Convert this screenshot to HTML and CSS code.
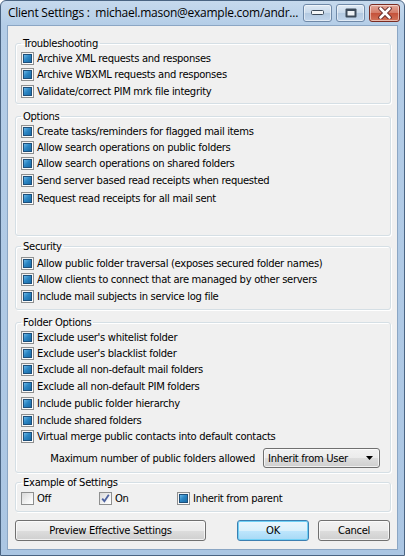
FILE: index.html
```html
<!DOCTYPE html>
<html>
<head>
<meta charset="utf-8">
<link rel="stylesheet" href="styles.css">
</head>
<body>
<div class="window">
  <div class="titlebar">
    <span class="title">Client Settings :  michael.mason@example.com/andr...</span>
    <div class="caption-btns">
      <span class="cap-btn"><svg width="13" height="6" viewBox="0 0 13 6"><rect x="0.5" y="0.5" width="12" height="4" rx="1" fill="#f4f6f8" stroke="#3c4a5a"/></svg></span>
      <span class="cap-btn"><svg width="12" height="10" viewBox="0 0 12 10"><rect x="0.5" y="0.5" width="11" height="9" rx="1" fill="#3c4a5a"/><rect x="2.5" y="3" width="7" height="4.5" fill="#eef2f6"/></svg></span>
      <span class="cap-btn close"><svg width="14" height="12" viewBox="0 0 14 12"><path d="M2.5 1.5 L11.5 10.5 M11.5 1.5 L2.5 10.5" stroke="#5a2020" stroke-width="4.4" stroke-linecap="round"/><path d="M2.5 1.5 L11.5 10.5 M11.5 1.5 L2.5 10.5" stroke="#ffffff" stroke-width="2.6" stroke-linecap="round"/></svg></span>
    </div>
  </div>
  <div class="client">
    <fieldset class="group g-trouble">
      <legend>Troubleshooting</legend>
      <div class="row h16"><span class="cb"><i></i></span>Archive XML requests and responses</div>
      <div class="row h17"><span class="cb"><i></i></span>Archive WBXML requests and responses</div>
      <div class="row h16"><span class="cb"><i></i></span>Validate/correct PIM mrk file integrity</div>
    </fieldset>
    <fieldset class="group g-options">
      <legend>Options</legend>
      <div class="row h16"><span class="cb"><i></i></span>Create tasks/reminders for flagged mail items</div>
      <div class="row h16"><span class="cb"><i></i></span>Allow search operations on public folders</div>
      <div class="row h17"><span class="cb"><i></i></span>Allow search operations on shared folders</div>
      <div class="row h16"><span class="cb"><i></i></span>Send server based read receipts when requested</div>
      <div class="row h20"><span class="cb"><i></i></span>Request read receipts for all mail sent</div>
    </fieldset>
    <fieldset class="group g-security">
      <legend>Security</legend>
      <div class="row h16"><span class="cb"><i></i></span>Allow public folder traversal (exposes secured folder names)</div>
      <div class="row h17"><span class="cb"><i></i></span>Allow clients to connect that are managed by other servers</div>
      <div class="row h16"><span class="cb"><i></i></span>Include mail subjects in service log file</div>
    </fieldset>
    <fieldset class="group g-folder">
      <legend>Folder Options</legend>
      <div class="row h16"><span class="cb"><i></i></span>Exclude user's whitelist folder</div>
      <div class="row h16"><span class="cb"><i></i></span>Exclude user's blacklist folder</div>
      <div class="row h17"><span class="cb"><i></i></span>Exclude all non-default mail folders</div>
      <div class="row h17"><span class="cb"><i></i></span>Exclude all non-default PIM folders</div>
      <div class="row h17"><span class="cb"><i></i></span>Include public folder hierarchy</div>
      <div class="row h16"><span class="cb"><i></i></span>Include shared folders</div>
      <div class="row h17"><span class="cb"><i></i></span>Virtual merge public contacts into default contacts</div>
      <div class="select-row">
        <span class="select-label">Maximum number of public folders allowed</span>
        <span class="select"><span>Inherit from User</span><svg width="7" height="4" viewBox="0 0 7 4"><path d="M0 0 H7 L3.5 4 Z" fill="#000"/></svg></span>
      </div>
    </fieldset>
    <fieldset class="group g-example">
      <legend>Example of Settings</legend>
      <div class="example-row">
        <div class="ex-item w-off"><span class="cb off"></span>Off</div>
        <div class="ex-item w-on"><span class="cb off"><svg width="11" height="11" viewBox="0 0 11 11"><path d="M2.2 5.6 L4.4 8.2 L8.8 1.8" fill="none" stroke="#4d62a0" stroke-width="1.8"/></svg></span>On</div>
        <div class="ex-item"><span class="cb"><i></i></span>Inherit from parent</div>
      </div>
    </fieldset>
    <div class="buttons">
      <span class="btn preview">Preview Effective Settings</span>
      <span class="btn ok">OK</span>
      <span class="btn cancel">Cancel</span>
    </div>
  </div>
</div>
</body>
</html>
```
FILE: styles.css
```css
html, body {
  margin: 0;
  padding: 0;
  background: #ffffff;
}
.window {
  width: 405px;
  height: 556px;
  box-sizing: border-box;
  border: 1px solid #4a6482;
  border-radius: 6px 6px 0 0;
  background: linear-gradient(#c6d9ed, #b4cde7 24px, #abc6e3);
  display: flex;
  flex-direction: column;
  font-family: "DejaVu Sans", sans-serif;
  font-size: 10px;
  letter-spacing: -0.3px;
  color: #000;
}
.titlebar {
  height: 24px;
  display: flex;
  align-items: center;
  padding-left: 7px;
  position: relative;
}
.title {
  font-family: "Open Sans", sans-serif;
  font-size: 12px;
  letter-spacing: -0.25px;
  white-space: pre;
  color: #000;
  margin-top: -1px;
  flex: none;
}
.caption-btns {
  margin-left: auto;
  margin-right: 4px;
  display: flex;
  gap: 4px;
  align-self: flex-start;
  margin-top: 3px;
  flex: none;
}
.cap-btn {
  width: 29px;
  height: 18px;
  flex: none;
  box-sizing: border-box;
  border: 1px solid #6f89a8;
  border-radius: 3px;
  background: linear-gradient(#dfe9f4, #c8d9eb 50%, #b3c9e1 51%, #c2d6ec);
  display: flex;
  align-items: center;
  justify-content: center;
  box-shadow: inset 0 0 0 1px rgba(255,255,255,0.5);
}
.cap-btn.close {
  width: 31px;
  border-color: #7a2c22;
  background: linear-gradient(#e3a89a, #d47a66 50%, #c4513a 51%, #d3745a);
}
.client {
  flex: 1;
  margin: 0 6px 5px;
  border: 1px solid #8ba6c4;
  background: #f0f0f0;
  padding: 11px 6px 0 7px;
  display: flex;
  flex-direction: column;
}
.group {
  margin: 0;
  padding: 0 0 0 5px;
  border: 1px solid #d5dfe5;
  border-radius: 3px;
  box-shadow: inset 1px 1px 0 #fff, 1px 1px 0 #fff;
  min-width: 0;
}
.group legend {
  padding: 0 2px;
  line-height: 13px;
  height: 13px;
  font-size: 10px;
}
.g-trouble { padding-bottom: 4px; }
.g-options { margin-top: 6px; padding-bottom: 27px; }
.g-security { margin-top: 4px; padding-top: 2px; padding-bottom: 5px; }
.g-folder { margin-top: 6px; padding-bottom: 4px; }
.g-example { margin-top: 3px; padding-bottom: 4px; }
.row {
  display: flex;
  align-items: center;
  white-space: nowrap;
}
.h16 { height: 16px; }
.h17 { height: 17px; }
.h20 { height: 20px; }
.cb {
  width: 13px;
  height: 13px;
  box-sizing: border-box;
  border: 1px solid #8e8f8f;
  background: linear-gradient(135deg, #f0f0f0, #ffffff);
  padding: 1px;
  margin-right: 3px;
  flex: none;
  display: flex;
  align-items: center;
  justify-content: center;
}
.cb i {
  display: block;
  width: 9px;
  height: 9px;
  box-sizing: border-box;
  border: 1px solid #1d4f7a;
  background: linear-gradient(135deg, #6ab7e6, #2b86c4 45%, #1a6ba6);
}
.cb.off {
  background: linear-gradient(135deg, #d9d9d9, #f7f7f7 70%, #ffffff);
  padding: 0;
}
.select-row {
  display: flex;
  align-items: center;
  justify-content: flex-end;
  height: 20px;
  margin-top: 3px;
  white-space: nowrap;
}
.select {
  margin-left: 8px;
  margin-right: 10px;
  width: 117px;
  flex: none;
  height: 20px;
  box-sizing: border-box;
  border: 1px solid #707070;
  border-radius: 3px;
  background: linear-gradient(#f2f2f2, #ebebeb 50%, #dddddd 51%, #cfcfcf);
  box-shadow: inset 0 0 0 1px rgba(255,255,255,0.7);
  display: flex;
  align-items: center;
  padding: 0 6px 0 4px;
}
.select svg {
  margin-left: auto;
}
.example-row {
  display: flex;
  height: 18px;
  align-items: center;
}
.ex-item {
  display: flex;
  align-items: center;
}
.w-off { width: 78px; }
.w-on { width: 78px; }
.buttons {
  display: flex;
  margin-top: 8px;
  gap: 0;
}
.btn {
  height: 21px;
  box-sizing: border-box;
  border: 1px solid #707070;
  border-radius: 3px;
  background: linear-gradient(#f2f2f2, #ebebeb 50%, #dddddd 51%, #cfcfcf);
  box-shadow: inset 0 0 0 1px rgba(255,255,255,0.7);
  display: flex;
  align-items: center;
  justify-content: center;
}
.preview { width: 191px; }
.ok {
  width: 72px;
  margin-left: 31px;
  border-color: #3c7fb1;
  background: linear-gradient(#eaf6fd, #d9f0fc 50%, #bee6fd 51%, #a7d9f5);
  box-shadow: inset 0 0 0 1px #6fd0f6;
}
.cancel { width: 72px; margin-left: 9px; }
```
